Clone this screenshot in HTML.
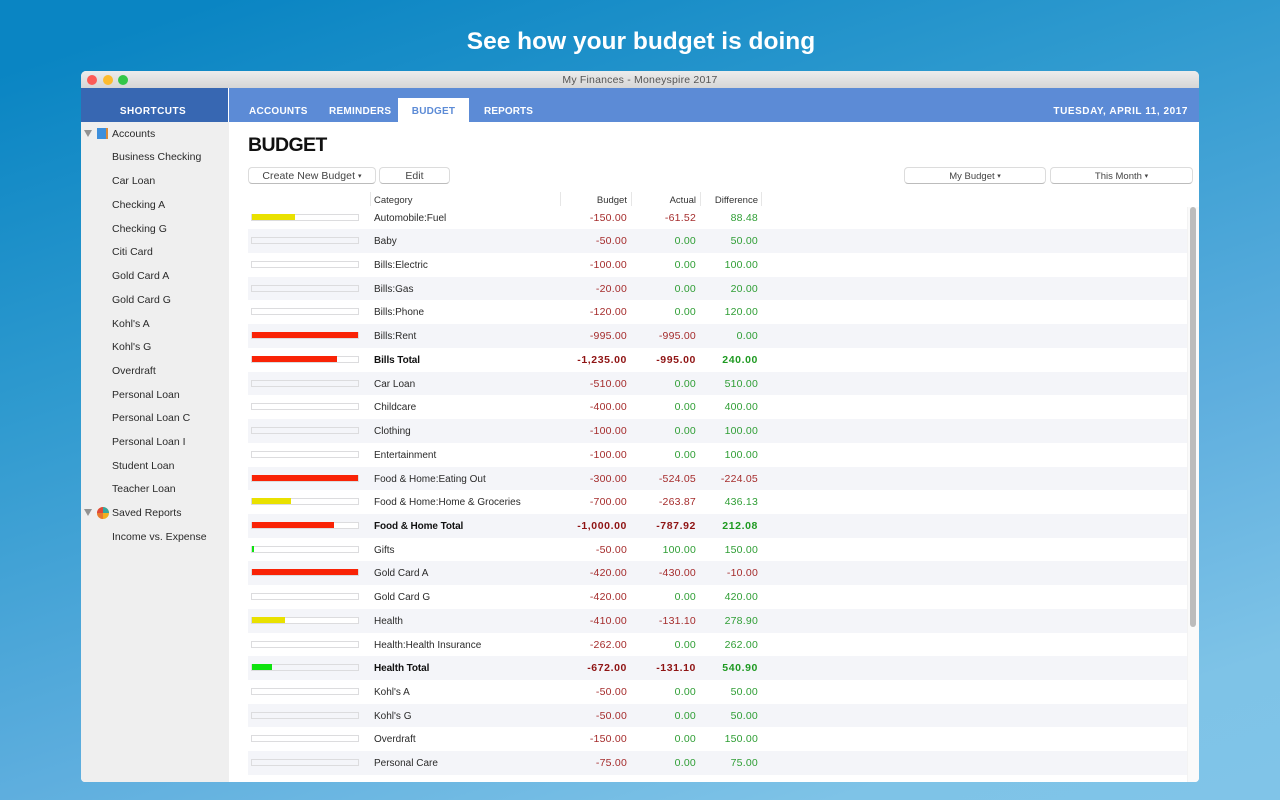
<!DOCTYPE html>
<html><head><meta charset="utf-8">
<style>
html,body{margin:0;padding:0;width:1280px;height:800px;overflow:hidden}
body{position:relative;background:linear-gradient(161.7deg,#0a85c3 0%,#0a85c3 6%,#2f9acf 34%,#5eaede 65%,#7ec3e7 88%,#80c4e8 100%);font-family:"Liberation Sans",sans-serif;color:#222}
h1{position:absolute;left:0;top:26px;width:1282px;margin:0;text-align:center;color:#fff;font-size:24.5px;line-height:32px;font-weight:bold}
#w{position:absolute;left:81px;top:71px;width:1118px;height:711px;background:#fff;border-radius:5px 5px 4px 4px;overflow:hidden}
.a{position:absolute;white-space:nowrap}
#tb{left:0;top:0;width:1118px;height:17px;background:linear-gradient(#ececec,#d6d6d6);text-align:center;font-size:10.5px;line-height:18px;color:#555;letter-spacing:.2px}
.dot{width:10px;height:10px;border-radius:50%;top:4px}
#sh{left:0;top:17px;width:144px;padding-right:3px;height:34px;background:#3767b2;color:#fff;font-weight:bold;font-size:10px;line-height:47px;text-align:center;letter-spacing:.45px}
#sd{left:0;top:51px;width:148px;height:660px;background:#efefef}
#nav{left:148px;top:17px;width:970px;height:34px;background:#5c8bd6}
.t{color:#fff;font-weight:bold;font-size:10px;line-height:14px;top:17px;letter-spacing:.25px}
#bt{left:169px;top:10px;width:71px;height:24px;background:#fff;color:#5c8bd6;font-weight:bold;font-size:10px;line-height:27px;text-align:center;letter-spacing:.2px}
.s{left:31px;font-size:10.5px;line-height:14px;color:#2a2a2a;letter-spacing:0}
.btn{background:#fff;border:1px solid #dcdcdc;border-bottom-color:#bcbcbc;border-radius:4px;height:15px;top:96px;text-align:center;font-size:10.5px;line-height:17px;color:#444;letter-spacing:.06px}
.sm{font-size:9.5px;letter-spacing:0}
.h{font-size:9.5px;line-height:12px;top:122.5px;margin-top:1px;color:#333;letter-spacing:0}
.sep{width:1px;height:14px;top:121px;background:#e6e6e6}
#rows{left:167px;top:134.6px;width:939px}
.r{position:relative;height:23.72px;font-size:10px;line-height:24px;color:#2a2a2a}
.r:nth-child(even){background:#f4f5f9}
.r span{position:absolute;top:0;white-space:nowrap}
.r span.c{left:126px;top:1px}
.n{text-align:right;width:70px;color:#a52c2c;font-size:10.5px;letter-spacing:.22px}
.g{color:#2f9e35}
.b1{left:-70px;right:auto;margin-left:379px}
.b2{margin-left:448px;left:-70px}
.b3{margin-left:510px;left:-70px}
.bold{font-weight:bold;letter-spacing:-.1px;color:#111}
.bold .n{color:#8f1414;letter-spacing:.6px}
.bold .g{color:#1f9a22}
.bar{position:absolute;left:3px;top:8px;width:106px;height:5px;background:#fff;border:1px solid #dcdcde}
.bar i{display:block;height:6px;position:absolute;left:0;top:-1px}
.y{background:#e9e100}.rd{background:#f92306}.gr{background:#0fe30f}
#track{left:1106px;top:136px;width:11px;height:575px;background:#fafafa;border-left:1px solid #f3f3f3}
#th{left:1109px;top:136px;width:6px;height:420px;background:#bcbcbc;border-radius:3px}
</style></head><body>
<h1>See how your budget is doing</h1>
<div id="w">
<div class="a" id="tb">My Finances - Moneyspire 2017</div>
<div class="a dot" style="left:6px;background:#fc5b57"></div>
<div class="a dot" style="left:22px;background:#fdbb2e"></div>
<div class="a dot" style="left:37px;background:#33c748"></div>
<div class="a" id="sh">SHORTCUTS</div>
<div class="a" id="sd"></div>
<div class="a" id="nav">
<div class="a t" style="left:20px">ACCOUNTS</div>
<div class="a t" style="left:100px">REMINDERS</div>
<div class="a" id="bt">BUDGET</div>
<div class="a t" style="left:255px;letter-spacing:.1px">REPORTS</div>
<div class="a t" style="right:11px;letter-spacing:.55px">TUESDAY, APRIL 11, 2017</div>
</div>
<svg class="a" style="left:3px;top:58px" width="9" height="9"><path d="M0 1H8L4 8Z" fill="#929292"/></svg>
<div class="a" style="left:16px;top:57px;width:11px;height:11px;background:#3d8fdc;border-right:2px solid #d98a3a;box-sizing:border-box"></div>
<div class="a s" style="top:56px">Accounts</div>
<div class="a s" style="top:79px">Business Checking</div>
<div class="a s" style="top:103px">Car Loan</div>
<div class="a s" style="top:127px">Checking A</div>
<div class="a s" style="top:151px">Checking G</div>
<div class="a s" style="top:174px">Citi Card</div>
<div class="a s" style="top:198px">Gold Card A</div>
<div class="a s" style="top:222px">Gold Card G</div>
<div class="a s" style="top:246px">Kohl's A</div>
<div class="a s" style="top:269px">Kohl's G</div>
<div class="a s" style="top:293px">Overdraft</div>
<div class="a s" style="top:317px">Personal Loan</div>
<div class="a s" style="top:340px">Personal Loan C</div>
<div class="a s" style="top:364px">Personal Loan I</div>
<div class="a s" style="top:388px">Student Loan</div>
<div class="a s" style="top:411px">Teacher Loan</div>
<svg class="a" style="left:3px;top:437px" width="9" height="9"><path d="M0 1H8L4 8Z" fill="#929292"/></svg>
<svg class="a" style="left:16px;top:436px" width="12" height="12"><circle cx="6" cy="6" r="6" fill="#f0b020"/><path d="M6 6V0A6 6 0 0 1 12 6Z" fill="#35a7a0"/><path d="M6 6V0A6 6 0 0 0 0 6Z" fill="#e0483a"/><path d="M6 6H0A6 6 0 0 0 6 12Z" fill="#e87a30"/></svg>
<div class="a s" style="top:435px">Saved Reports</div>
<div class="a s" style="top:459px">Income vs. Expense</div>

<div class="a" style="left:167px;top:62px;font-size:19.5px;line-height:24px;font-weight:bold;color:#111;letter-spacing:-.6px">BUDGET</div>
<div class="a btn" style="left:167px;width:126px">Create New Budget <span style="font-size:7px;vertical-align:1px">▾</span></div>
<div class="a btn" style="left:298px;width:69px">Edit</div>
<div class="a btn sm" style="left:823px;width:140px">My Budget <span style="font-size:7px;vertical-align:1px">▾</span></div>
<div class="a btn sm" style="left:969px;width:141px">This Month <span style="font-size:7px;vertical-align:1px">▾</span></div>

<div class="a sep" style="left:289px"></div><div class="a sep" style="left:479px"></div><div class="a sep" style="left:550px"></div><div class="a sep" style="left:619px"></div><div class="a sep" style="left:680px"></div>
<div class="a h" style="left:293px">Category</div>
<div class="a h" style="right:572px">Budget</div>
<div class="a h" style="right:503px">Actual</div>
<div class="a h" style="right:441px">Difference</div>

<div class="a" id="rows">
<div class="r"><div class="bar"><i class="y" style="width:43px"></i></div><span class="c">Automobile:Fuel</span><span class="n b1">-150.00</span><span class="n b2">-61.52</span><span class="n b3 g">88.48</span></div>
<div class="r"><div class="bar" style="background:#f4f5f9"></div><span class="c">Baby</span><span class="n b1">-50.00</span><span class="n b2 g">0.00</span><span class="n b3 g">50.00</span></div>
<div class="r"><div class="bar"></div><span class="c">Bills:Electric</span><span class="n b1">-100.00</span><span class="n b2 g">0.00</span><span class="n b3 g">100.00</span></div>
<div class="r"><div class="bar" style="background:#f4f5f9"></div><span class="c">Bills:Gas</span><span class="n b1">-20.00</span><span class="n b2 g">0.00</span><span class="n b3 g">20.00</span></div>
<div class="r"><div class="bar"></div><span class="c">Bills:Phone</span><span class="n b1">-120.00</span><span class="n b2 g">0.00</span><span class="n b3 g">120.00</span></div>
<div class="r"><div class="bar"><i class="rd" style="width:106px"></i></div><span class="c">Bills:Rent</span><span class="n b1">-995.00</span><span class="n b2">-995.00</span><span class="n b3 g">0.00</span></div>
<div class="r bold"><div class="bar"><i class="rd" style="width:85px"></i></div><span class="c">Bills Total</span><span class="n b1">-1,235.00</span><span class="n b2">-995.00</span><span class="n b3 g">240.00</span></div>
<div class="r"><div class="bar" style="background:#f4f5f9"></div><span class="c">Car Loan</span><span class="n b1">-510.00</span><span class="n b2 g">0.00</span><span class="n b3 g">510.00</span></div>
<div class="r"><div class="bar"></div><span class="c">Childcare</span><span class="n b1">-400.00</span><span class="n b2 g">0.00</span><span class="n b3 g">400.00</span></div>
<div class="r"><div class="bar" style="background:#f4f5f9"></div><span class="c">Clothing</span><span class="n b1">-100.00</span><span class="n b2 g">0.00</span><span class="n b3 g">100.00</span></div>
<div class="r"><div class="bar"></div><span class="c">Entertainment</span><span class="n b1">-100.00</span><span class="n b2 g">0.00</span><span class="n b3 g">100.00</span></div>
<div class="r"><div class="bar"><i class="rd" style="width:106px"></i></div><span class="c">Food &amp; Home:Eating Out</span><span class="n b1">-300.00</span><span class="n b2">-524.05</span><span class="n b3">-224.05</span></div>
<div class="r"><div class="bar"><i class="y" style="width:39px"></i></div><span class="c">Food &amp; Home:Home &amp; Groceries</span><span class="n b1">-700.00</span><span class="n b2">-263.87</span><span class="n b3 g">436.13</span></div>
<div class="r bold"><div class="bar"><i class="rd" style="width:82px"></i></div><span class="c">Food &amp; Home Total</span><span class="n b1">-1,000.00</span><span class="n b2">-787.92</span><span class="n b3 g">212.08</span></div>
<div class="r"><div class="bar"><i class="gr" style="width:2px"></i></div><span class="c">Gifts</span><span class="n b1">-50.00</span><span class="n b2 g">100.00</span><span class="n b3 g">150.00</span></div>
<div class="r"><div class="bar"><i class="rd" style="width:106px"></i></div><span class="c">Gold Card A</span><span class="n b1">-420.00</span><span class="n b2">-430.00</span><span class="n b3">-10.00</span></div>
<div class="r"><div class="bar"></div><span class="c">Gold Card G</span><span class="n b1">-420.00</span><span class="n b2 g">0.00</span><span class="n b3 g">420.00</span></div>
<div class="r"><div class="bar"><i class="y" style="width:33px"></i></div><span class="c">Health</span><span class="n b1">-410.00</span><span class="n b2">-131.10</span><span class="n b3 g">278.90</span></div>
<div class="r"><div class="bar"></div><span class="c">Health:Health Insurance</span><span class="n b1">-262.00</span><span class="n b2 g">0.00</span><span class="n b3 g">262.00</span></div>
<div class="r bold"><div class="bar" style="background:#f4f5f9"><i class="gr" style="width:20px"></i></div><span class="c">Health Total</span><span class="n b1">-672.00</span><span class="n b2">-131.10</span><span class="n b3 g">540.90</span></div>
<div class="r"><div class="bar"></div><span class="c">Kohl's A</span><span class="n b1">-50.00</span><span class="n b2 g">0.00</span><span class="n b3 g">50.00</span></div>
<div class="r"><div class="bar" style="background:#f4f5f9"></div><span class="c">Kohl's G</span><span class="n b1">-50.00</span><span class="n b2 g">0.00</span><span class="n b3 g">50.00</span></div>
<div class="r"><div class="bar"></div><span class="c">Overdraft</span><span class="n b1">-150.00</span><span class="n b2 g">0.00</span><span class="n b3 g">150.00</span></div>
<div class="r"><div class="bar" style="background:#f4f5f9"></div><span class="c">Personal Care</span><span class="n b1">-75.00</span><span class="n b2 g">0.00</span><span class="n b3 g">75.00</span></div>
</div>
<div class="a" id="track"></div>
<div class="a" id="th"></div>
</div>
</body></html>
